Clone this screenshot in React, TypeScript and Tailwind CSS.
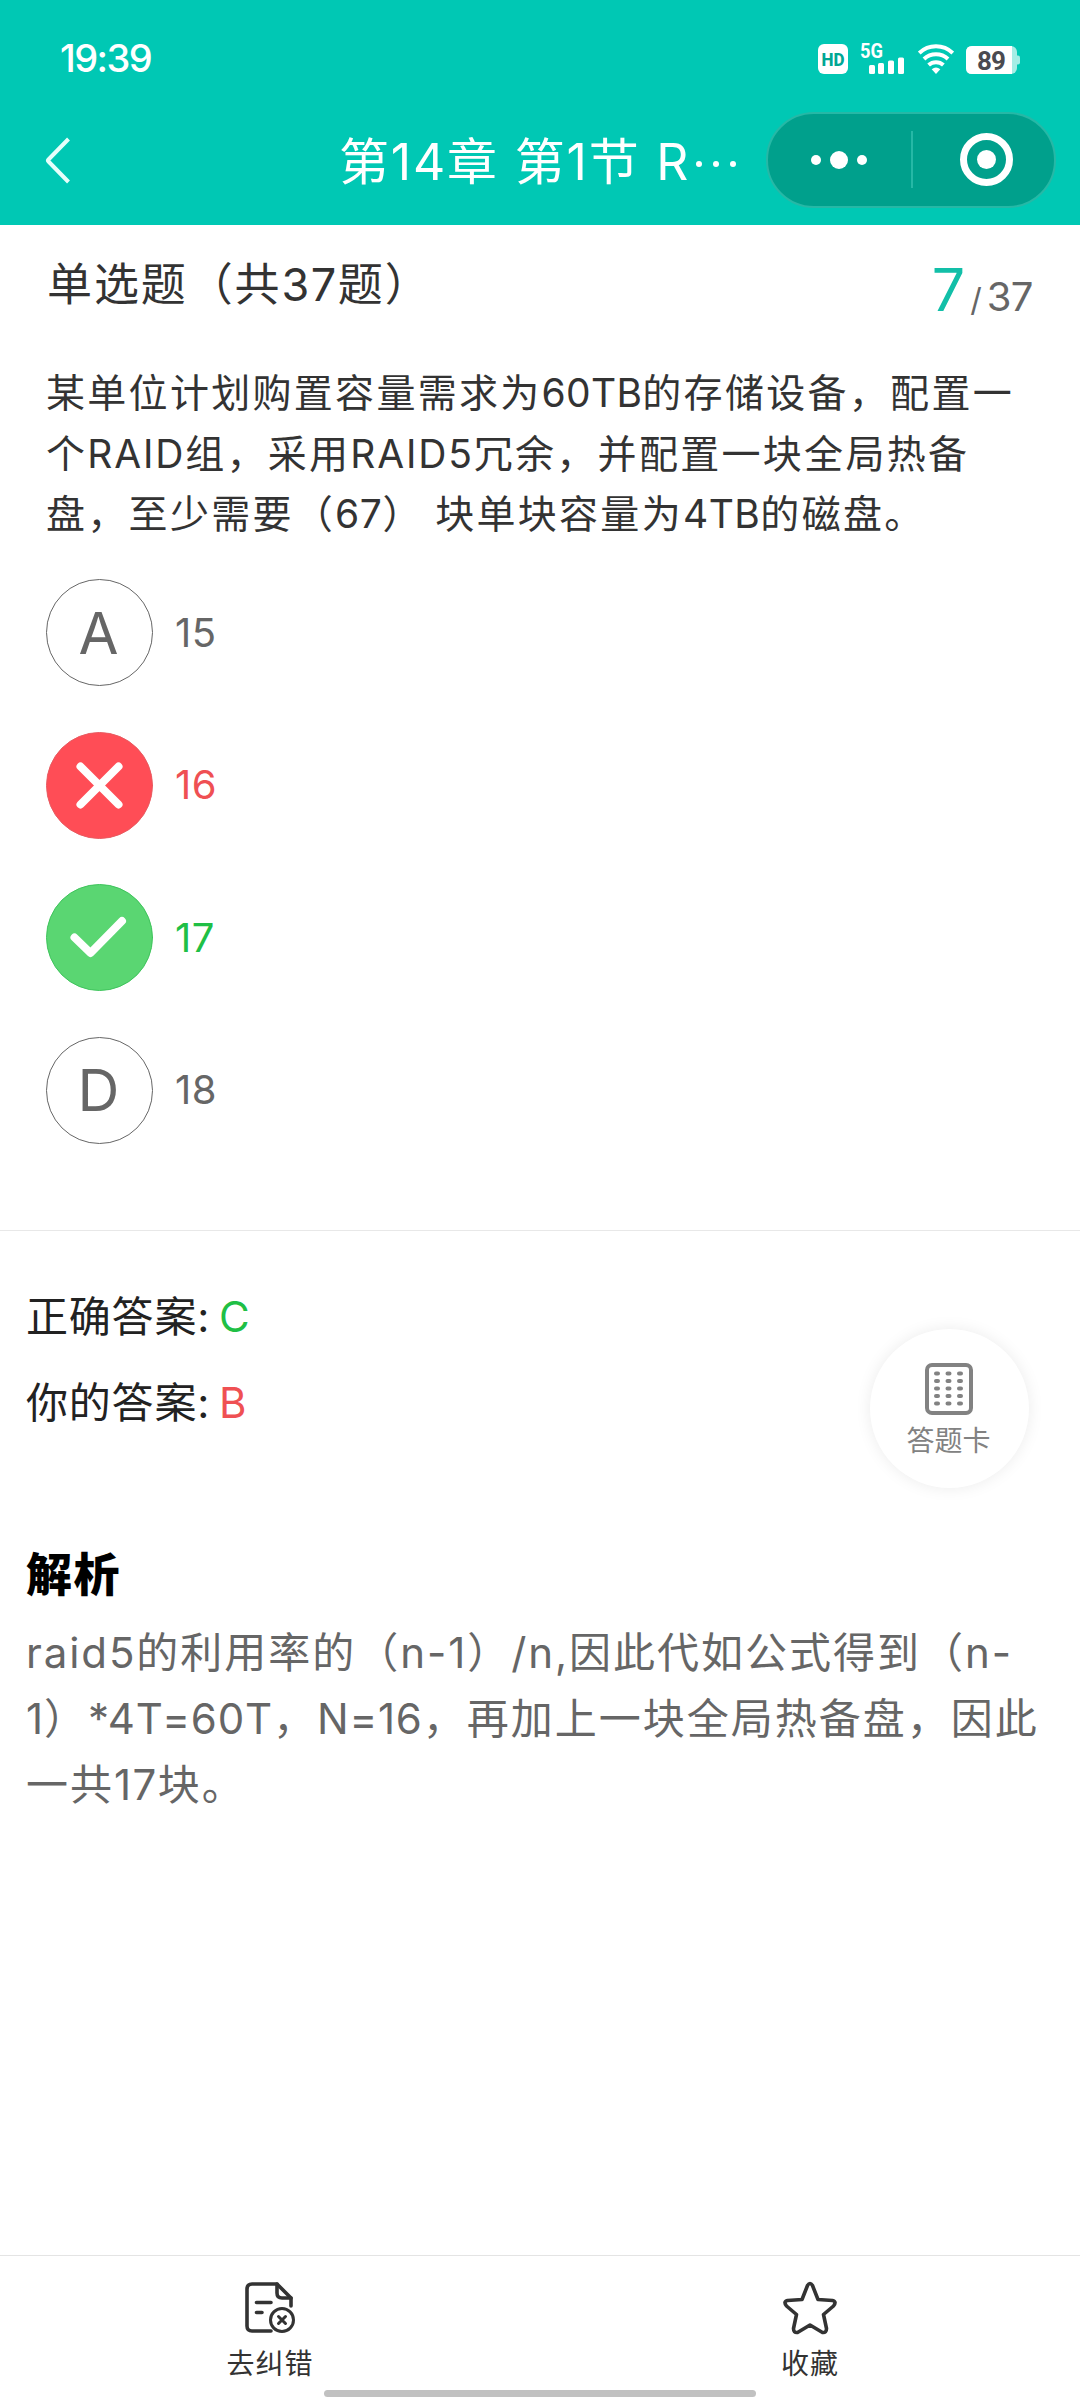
import clsx from "clsx";

type OptionState = "default" | "wrong" | "correct";

interface Option {
  key: string;
  text: string;
  state: OptionState;
}

interface Line {
  text: string;
  latin: string;
}

const options: Option[] = [
  { key: "A", text: "15", state: "default" },
  { key: "B", text: "16", state: "wrong" },
  { key: "C", text: "17", state: "correct" },
  { key: "D", text: "18", state: "default" },
];

const questionLines: Line[] = [
  { text: "某单位计划购置容量需求为60TB的存储设备，配置一", latin: "tracking-[0.300px]" },
  { text: "个RAID组，采用RAID5冗余，并配置一块全局热备", latin: "tracking-[1.800px]" },
  { text: "盘，至少需要（67） 块单块容量为4TB的磁盘。", latin: "tracking-[0.500px]" },
];

const analysisLines: Line[] = [
  { text: "raid5的利用率的（n-1）/n,因此代如公式得到（n-", latin: "tracking-[1.900px]" },
  { text: "1）*4T=60T，N=16，再加上一块全局热备盘，因此", latin: "tracking-[0.800px]" },
  { text: "一共17块。", latin: "tracking-[1.400px]" },
];

// Latin runs need their own tracking next to the Chinese text
const Mixed = ({ text, latin }: Line) => (
  <>
    {text.split(/([\x20-\x7e]+)/).map((part, i) =>
      i % 2 === 1 ? (
        <span key={i} className={latin}>{part}</span>
      ) : (
        part
      )
    )}
  </>
);

const StatusBar = () => (
  <div className="flex h-[96px] items-center justify-between pt-[20px] pl-[60px] pr-[60px] text-white">
    <span className="text-[38px] leading-none font-medium tracking-[-1.600px]">19:39</span>
    <div className="flex h-[32px] items-end">
      <svg width="30" height="30" viewBox="0 0 30 30" className="mr-[12px]">
        <rect width="30" height="30" rx="6" fill="#fff" />
        <text x="3.500" y="22" fontSize="19" fontWeight="800" fontFamily="Roboto" fill="#00a794" textLength="23" lengthAdjust="spacingAndGlyphs">HD</text>
      </svg>
      <svg width="46" height="38" viewBox="0 -6 46 38" fill="#fff" className="mr-[12px]">
        <text x="0" y="16" fontSize="20" fontWeight="700" fontFamily="Roboto" textLength="23" lengthAdjust="spacingAndGlyphs">5G</text>
        <rect x="9" y="23" width="6" height="9" rx="1.5" />
        <rect x="18" y="21" width="6" height="11" rx="1.5" />
        <rect x="28" y="18.500" width="6" height="13.500" rx="1.5" />
        <rect x="38" y="15.500" width="6" height="16.500" rx="1.5" />
      </svg>
      <svg width="36" height="30" viewBox="0 0 36 30" fill="none" stroke="#fff" strokeWidth="4" className="mr-[12px]">
        <path d="M1.200 9a24 24 0 0 1 33.600 0" />
        <path d="M6 15a17.500 17.500 0 0 1 24 0" />
        <path d="M10.600 21a11 11 0 0 1 14.800 0" />
        <path d="M18 30l-4.300-4.800q4.300-3.200 8.600 0z" fill="#fff" stroke="none" />
      </svg>
      <svg width="54" height="28" viewBox="0 0 54 28">
        <rect x="0" y="0" width="51" height="28" rx="6" fill="#a6ede5" />
        <path d="M51 9.500h1q2 0 2 2v5q0 2-2 2h-1z" fill="#a6ede5" />
        <path d="M6 0h40v28H6q-6 0-6-6V6q0-6 6-6z" fill="#fff" />
        <text x="11" y="23.500" fontSize="26" fontWeight="700" fontFamily="Roboto" fill="#4a4a50" textLength="29">89</text>
      </svg>
    </div>
  </div>
);

const NavBar = () => (
  <div className="flex h-[129px] items-center pb-[2px] pl-[45px] pr-[24px]">
    <svg width="26" height="50" viewBox="0 0 26 50" fill="none" stroke="#e6fffb" strokeWidth="4" strokeLinejoin="round">
      <path d="M23.500 4L3.500 24.500Q2.500 25.500 3.500 26.500L23.500 47" />
    </svg>
    <h1 className="mt-[5px] ml-[268px] flex w-[427px] items-center text-[50px] leading-none font-normal tracking-[1.800px] whitespace-pre text-white">
      <span>第14章 第1节 R</span>
      <span className="mt-[4px] ml-[6px] flex gap-[11px]">
        <i className="h-[6px] w-[6px] rounded-full bg-white" />
        <i className="h-[6px] w-[6px] rounded-full bg-white" />
        <i className="h-[6px] w-[6px] rounded-full bg-white" />
      </span>
    </h1>
    <div className="flex h-[96px] w-[290px] shrink-0 items-center rounded-full border-2 border-[#26b8a6] bg-[#00a08c]">
      <div className="flex w-[143px] items-center justify-center gap-[9px] pr-[2px]">
        <i className="h-[10px] w-[10px] rounded-full bg-white" />
        <i className="h-[18px] w-[18px] rounded-full bg-white" />
        <i className="h-[10px] w-[10px] rounded-full bg-white" />
      </div>
      <div className="h-[57px] w-[2px] bg-[#26b8a6]" />
      <div className="flex flex-1 items-center justify-center pl-[6px]">
        <div className="flex h-[53px] w-[53px] items-center justify-center rounded-full border-[7px] border-white">
          <i className="h-[19px] w-[19px] rounded-full bg-white" />
        </div>
      </div>
    </div>
  </div>
);

const OptionMark = ({ option }: { option: Option }) => {
  if (option.state === "wrong") {
    return (
      <svg width="107" height="107" viewBox="0 0 107 107" fill="none" stroke="#fff" strokeWidth="8" strokeLinecap="round">
        <circle cx="53.500" cy="53.500" r="53" fill="#ff4d56" stroke="#e85a60" strokeWidth="1" />
        <path d="M34.500 34.500l38 38M72.500 34.500l-38 38" />
      </svg>
    );
  }
  if (option.state === "correct") {
    return (
      <svg width="107" height="107" viewBox="0 0 107 107" fill="none" stroke="#fff" strokeWidth="8" strokeLinecap="round" strokeLinejoin="round">
        <circle cx="53.500" cy="53.500" r="53" fill="#5ad672" stroke="#3fc45c" strokeWidth="1" />
        <path d="M28.500 53.500L44.500 69L76 37" />
      </svg>
    );
  }
  return (
    <div className="flex h-[107px] w-[107px] items-center justify-center rounded-full border border-[#666] pr-[2px] text-[58px] leading-none text-[#666]">
      {option.key}
    </div>
  );
};

const OptionRow = ({ option }: { option: Option }) => (
  <li className="flex h-[107px] items-center gap-[22px]">
    <OptionMark option={option} />
    <span
      className={clsx(
        "text-[40px] leading-none tracking-[0.500px]",
        option.state === "default" && "text-[#666]",
        option.state === "wrong" && "text-[#ef5053]",
        option.state === "correct" && "text-[#20bf45]"
      )}
    >
      {option.text}
    </span>
  </li>
);

const AnswerCardButton = () => (
  <button className="absolute top-[1329px] left-[870px] flex h-[159px] w-[159px] flex-col items-center rounded-full bg-white pt-[34px] pr-[2px] shadow-[0_0_16px_rgba(0,0,0,0.08)]">
    <svg width="48" height="52" viewBox="0 0 48 52" fill="none" stroke="#828282">
      <rect x="2" y="2" width="44" height="48" rx="5" strokeWidth="4" />
      <path d="M11 10.500h26M11 18h26M11 25.500h26M11 33h26M11 40.500h26" strokeWidth="4" strokeDasharray="2 9.500" strokeLinecap="round" />
    </svg>
    <span className="mt-[12px] text-[28px] leading-[28px] text-[#828282]">答题卡</span>
  </button>
);

const BottomBar = () => (
  <nav className="flex h-[145px] flex-col border-t border-[#e4e4e4] bg-white text-[28px] leading-[28px] tracking-[1px] text-[#333]">
    <div className="flex h-[134px] pt-[25px]">
      <button className="flex flex-1 flex-col items-center">
        <svg width="52" height="54" viewBox="0 0 52 54" fill="none" stroke="#333" strokeWidth="3.600" strokeLinecap="round" strokeLinejoin="round">
          <path d="M27 50H8Q3 50 3 45V8Q3 3 8 3H33L47 17V25" />
          <path d="M33 3V12Q33 17 38 17H47" />
          <path d="M12.500 21.500H27M12.500 31.500H18" />
          <circle cx="38" cy="39" r="11.500" strokeWidth="3" />
          <path d="M34.500 35.500l7 7M41.500 35.500l-7 7" strokeWidth="3" />
        </svg>
        <span className="mt-[15px]">去纠错</span>
      </button>
      <button className="flex flex-1 flex-col items-center">
        <svg width="54" height="54" viewBox="0 0 54 54" fill="none" stroke="#333" strokeWidth="3.600" strokeLinejoin="round">
          <path d="M24.500 4.500Q27 0.500 29.500 4.500L35 18.500L49.500 19.500Q54 20.500 50.500 25L40.500 33.500L43.500 47.500Q43.500 52 39.500 51.500L27 44L14.500 51.500Q10.500 52 10.500 47.500L13.500 33.500L3.500 25Q0 20.500 4.500 19.500L19 18.500Z" />
        </svg>
        <span className="mt-[15px]">收藏</span>
      </button>
    </div>
    <div className="mx-auto h-[7px] w-[432px] rounded-full bg-[#c1c1c1]" />
  </nav>
);

export default function App() {
  return (
    <div className="relative flex h-[2400px] w-[1080px] flex-col overflow-hidden bg-white font-['Inter','Noto_Sans_CJK_SC',sans-serif]">
      <header className="h-[225px] shrink-0 bg-[#00c8b4]">
        <StatusBar />
        <NavBar />
      </header>

      <section className="h-[1006px] shrink-0 border-b border-[#e8e8e8] pr-[47px] pl-[46px]">
        <div className="flex h-[120px] justify-between">
          <h2 className="pt-[37px] pl-[1px] text-[45px] leading-[46px] tracking-[1.900px] text-[#333]">
            <Mixed text="单选题（共37题）" latin="tracking-[1.500px]" />
          </h2>
          <div className="flex items-baseline pt-[30px] text-[#666]">
            <span className="text-[59px] leading-[70px] text-[#12bfa8]">7</span>
            <span className="mx-[5px] text-[32px] leading-none">/</span>
            <span className="text-[40px] leading-none tracking-[-0.500px]">37</span>
          </div>
        </div>
        <div className="mt-[18px] text-[39px] leading-[60.700px] tracking-[2.300px] whitespace-pre text-[#333]">
          {questionLines.map((line) => (
            <p key={line.text}>
              <Mixed {...line} />
            </p>
          ))}
        </div>
        <ul className="mt-[34px] flex flex-col gap-[45.600px]">
          {options.map((option) => (
            <OptionRow key={option.key} option={option} />
          ))}
        </ul>
      </section>

      <section className="flex-1 pt-[43px] pl-[26px]">
        <div className="text-[42px] leading-[86px] tracking-[0.800px] text-[#222]">
          <p>
            正确答案:<span className="ml-[9px] text-[#20bf45]">C</span>
          </p>
          <p>
            你的答案:<span className="ml-[9px] text-[#ef5053]">B</span>
          </p>
        </div>
        <h3 className="mt-[98px] text-[46px] leading-[60px] font-black tracking-[1.600px] text-black">解析</h3>
        <div className="mt-[16px] text-[42px] leading-[66px] tracking-[2px] whitespace-pre text-[#666]">
          {analysisLines.map((line) => (
            <p key={line.text}>
              <Mixed {...line} />
            </p>
          ))}
        </div>
      </section>

      <AnswerCardButton />
      <BottomBar />
    </div>
  );
}
